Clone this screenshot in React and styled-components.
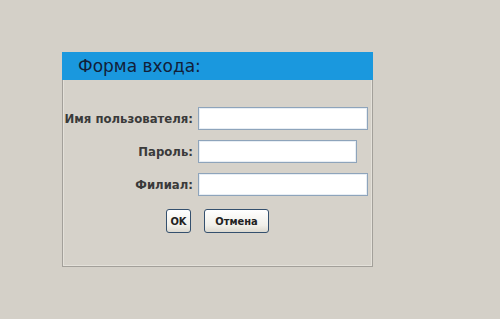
import styled, { createGlobalStyle } from "styled-components";

const fields = [
  { id: "user", label: "Имя пользователя:", width: 170 },
  { id: "pass", label: "Пароль:", width: 159, type: "password" },
  { id: "branch", label: "Филиал:", width: 170 }
];

export default function App() {
  return (
    <>
      <GlobalStyle />
      <Page>
        <Panel>
          <Header>Форма входа:</Header>
          <Body>
            <FieldGrid>
              {fields.map((f) => (
                <Row key={f.id}>
                  <Label htmlFor={f.id}>{f.label}</Label>
                  <Input id={f.id} type={f.type || "text"} $width={f.width} />
                </Row>
              ))}
            </FieldGrid>
            <Buttons>
              <Button $narrow>OK</Button>
              <Button>Отмена</Button>
            </Buttons>
          </Body>
        </Panel>
      </Page>
    </>
  );
}

const GlobalStyle = createGlobalStyle`
  html, body {
    margin: 0;
    padding: 0;
    background: #d4d0c8;
  }
`;

const Page = styled.main`
  width: 500px;
  height: 319px;
  padding: 52px 0 0 62px;
  box-sizing: border-box;
  background: #d4d0c8;
  font-family: "DejaVu Sans", Verdana, sans-serif;
`;

const Panel = styled.section`
  width: 311px;
  height: 215px;
  box-sizing: border-box;
  border: 1px solid #a3a09a;
  box-shadow: inset 0 0 0 1px #e4e1da;
  background: #d6d2ca;
  display: flex;
  flex-direction: column;
`;

const Header = styled.h1`
  margin: -1px -1px 0;
  height: 28px;
  padding-left: 16px;
  background: #1a98de;
  color: #122038;
  font-size: 17px;
  font-weight: normal;
  line-height: 28px;
`;

const Body = styled.div`
  padding-top: 27px;
  display: flex;
  flex-direction: column;
`;

const FieldGrid = styled.div`
  display: grid;
  grid-template-columns: 130px 1fr;
  row-gap: 10px;
  column-gap: 5px;
`;

const Row = styled.div`
  display: contents;
`;

const Label = styled.label`
  justify-self: end;
  align-self: center;
  font-size: 11.7px;
  font-weight: bold;
  color: #3a3a3a;
  white-space: nowrap;
`;

const Input = styled.input`
  width: ${({ $width }) => $width}px;
  height: 23px;
  box-sizing: border-box;
  border: 1px solid #8ea4bb;
  box-shadow: inset 0 0 0 1px #e8eef4;
  background: #fff;
  outline: none;
`;

const Buttons = styled.div`
  display: flex;
  justify-content: center;
  gap: 13px;
  margin-top: 13px;
`;

const Button = styled.button`
  height: 24px;
  min-width: ${({ $narrow }) => ($narrow ? "25px" : "65px")};
  padding: 0 ${({ $narrow }) => ($narrow ? "3px" : "8px")};
  box-sizing: border-box;
  border: 1px solid #34506e;
  border-radius: 3px;
  background: linear-gradient(#ffffff, #f0efe9 70%, #dcd9d0);
  font-family: "DejaVu Sans Condensed", "DejaVu Sans", sans-serif;
  font-size: 11px;
  font-weight: bold;
  color: #222;
`;
